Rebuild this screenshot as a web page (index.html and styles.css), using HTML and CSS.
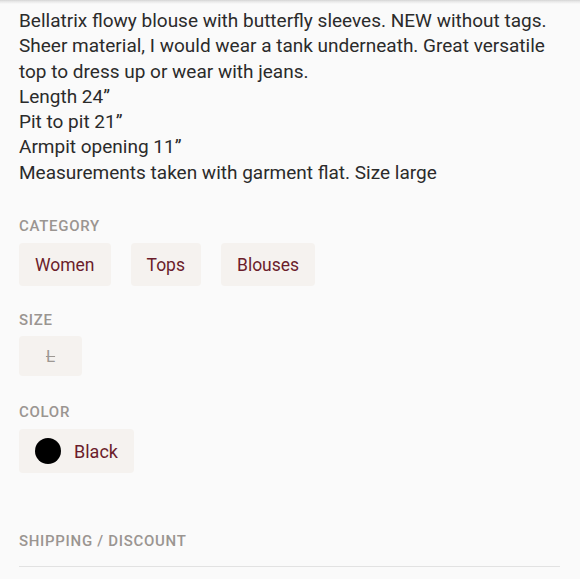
FILE: index.html
```html
<!DOCTYPE html>
<html lang="en">
<head>
<meta charset="utf-8">
<title>Listing details</title>
<link rel="stylesheet" href="styles.css">
</head>
<body>
<div class="topshadow"></div>
<main class="page">
  <p class="desc">Bellatrix flowy blouse with butterfly sleeves. NEW without tags. Sheer material, I would wear a tank underneath. Great versatile top to dress up or wear with jeans.<br>Length 24”<br>Pit to pit 21”<br>Armpit opening 11”<br>Measurements taken with garment flat. Size large</p>

  <section class="group group-category">
    <h3 class="label">CATEGORY</h3>
    <div class="chips">
      <span class="chip">Women</span>
      <span class="chip">Tops</span>
      <span class="chip">Blouses</span>
    </div>
  </section>

  <section class="group group-size">
    <h3 class="label">SIZE</h3>
    <div class="chips">
      <span class="chip chip-size">L</span>
    </div>
  </section>

  <section class="group group-color">
    <h3 class="label">COLOR</h3>
    <div class="chips">
      <span class="chip chip-color"><span class="swatch"></span>Black</span>
    </div>
  </section>

  <section class="group group-shipping">
    <h3 class="label">SHIPPING / DISCOUNT</h3>
    <div class="divider"></div>
  </section>
</main>
</body>
</html>
```

FILE: styles.css
```css
html, body {
  margin: 0;
  padding: 0;
  background: #fafafa;
}
body {
  font-family: Roboto, "Liberation Sans", sans-serif;
  color: #2a2a2a;
  width: 580px;
  height: 579px;
  overflow: hidden;
  position: relative;
}
.topshadow {
  position: absolute;
  left: 0;
  top: 0;
  width: 100%;
  height: 4px;
  background: linear-gradient(#d4d4d4, #e8e8e8 40%, rgba(250,250,250,0));
}
.page {
  padding: 8px 20px 0 19px;
}
.desc {
  margin: 0;
  font-size: 19px;
  line-height: 25.3px;
  color: #2b2b2b;
}
.label {
  margin: 0;
  font-size: 15px;
  line-height: 18px;
  font-weight: 500;
  letter-spacing: 0.7px;
  color: #9a9591;
}
.group-category { margin-top: 32px; }
.group-size { margin-top: 25px; }
.group-color { margin-top: 27px; }
.group-shipping { margin-top: 59px; }
.chips {
  display: flex;
  gap: 20px;
  margin-top: 8px;
}
.group-size .chips { margin-top: 7px; }
.chip {
  display: flex;
  align-items: center;
  height: 43px;
  padding: 0 16px;
  background: #f5f2ef;
  border-radius: 4px;
  font-size: 17.5px;
  color: #6b1d2b;
}
.chip-size {
  height: 40px;
  width: 63px;
  padding: 0;
  box-sizing: border-box;
  justify-content: center;
  color: #9d9893;
  text-decoration: line-through;
  font-size: 17px;
}
.chip-color {
  height: 44px;
  gap: 13px;
  font-size: 18px;
}
.swatch {
  width: 26px;
  height: 26px;
  border-radius: 50%;
  background: #000;
}
.divider {
  margin-top: 16px;
  height: 1px;
  background: #e2e2e2;
  width: 541px;
}
```
